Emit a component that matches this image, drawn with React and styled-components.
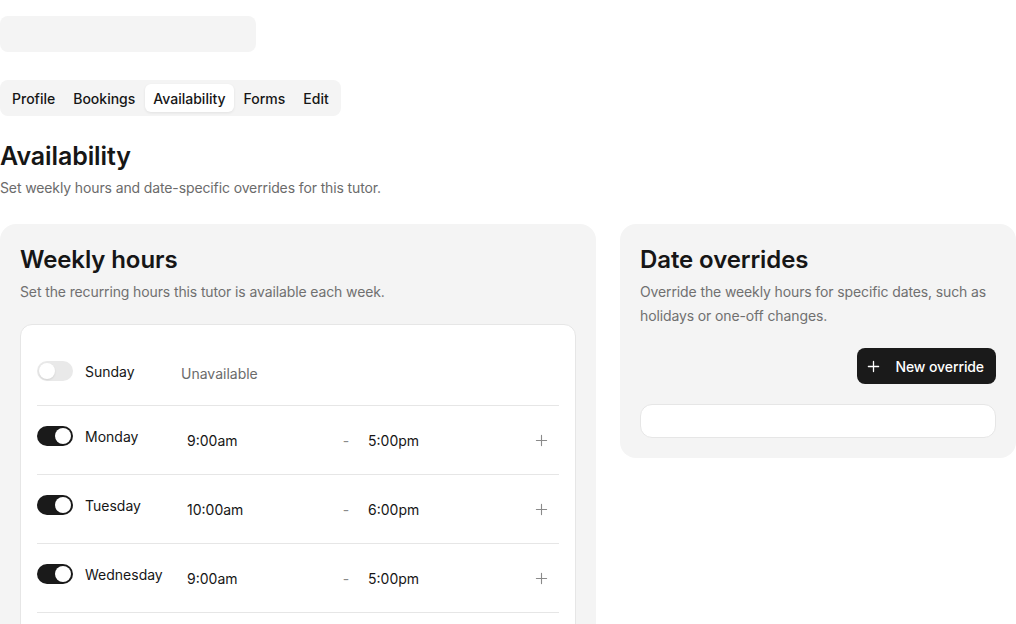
import React from "react";
import styled, { createGlobalStyle } from "styled-components";

const Global = createGlobalStyle`
  html, body { margin: 0; padding: 0; overflow: hidden; background: #fff; }
  body { font-family: Inter, "Noto Sans", sans-serif; color: #161616; -webkit-font-smoothing: antialiased; }
  * { box-sizing: border-box; }
`;

const Page = styled.div`
  width: 1016px;
  padding-top: 16px;
  display: flex;
  flex-direction: column;
`;

const Skeleton = styled.div`
  width: 256px;
  height: 36px;
  border-radius: 8px;
  background: #f4f4f4;
`;

const Tabs = styled.nav`
  margin-top: 28px;
  align-self: flex-start;
  display: flex;
  gap: 2px;
  padding: 4px;
  height: 36px;
  border-radius: 8px;
  background: #f4f4f4;
`;

const Tab = styled.button`
  border: 0;
  font: inherit;
  font-size: 14px;
  font-weight: 500;
  color: #161616;
  padding: 0 8px;
  height: 28px;
  border-radius: 6px;
  background: ${(p) => (p.$active ? "#fff" : "transparent")};
  box-shadow: ${(p) => (p.$active ? "0 1px 3px rgba(0,0,0,0.08)" : "none")};
`;

const Header = styled.header`
  margin-top: 24px;
`;

const H1 = styled.h1`
  margin: 0;
  font-size: 25px;
  line-height: 32px;
  font-weight: 600;
  letter-spacing: -0.1px;
`;

const Lead = styled.p`
  margin: 4px 0 0;
  font-size: 14px;
  line-height: 24px;
  letter-spacing: -0.12px;
  color: #6b6b6b;
`;

const Columns = styled.div`
  margin-top: 24px;
  display: grid;
  grid-template-columns: 596px 1fr;
  gap: 24px;
  align-items: start;
`;

const Card = styled.section`
  background: #f4f4f4;
  border-radius: 16px;
  padding: 20px;
  display: flex;
  flex-direction: column;
`;

const CardTitle = styled.h2`
  margin: 0;
  font-size: 24px;
  line-height: 32px;
  font-weight: 600;
  letter-spacing: -0.1px;
`;

const CardText = styled.p`
  margin: 4px 0 0;
  font-size: 14px;
  line-height: 24px;
  letter-spacing: -0.12px;
  color: #707070;
`;

const WhiteBox = styled.div`
  margin-top: 20px;
  background: #fff;
  border: 1px solid #e6e6e6;
  border-radius: 12px;
  padding: ${(p) => (p.$empty ? "0" : "16px")};
  height: ${(p) => (p.$empty ? "34px" : "auto")};
`;

const Row = styled.div`
  display: grid;
  grid-template-columns: 36px 84px 1fr 8px 1fr 36px;
  column-gap: 12px;
  align-items: start;
  padding: 16px 0;
  border-bottom: 1px solid #e6e6e6;
`;

const ToggleWrap = styled.div`
  height: 28px;
  display: flex;
  align-items: center;
`;

const Toggle = styled.span`
  position: relative;
  width: 36px;
  height: 20px;
  border-radius: 10px;
  background: ${(p) => (p.$on ? "#1a1a1a" : "#e9e9e9")};
  &::after {
    content: "";
    position: absolute;
    top: 2px;
    left: ${(p) => (p.$on ? "18px" : "2px")};
    width: 16px;
    height: 16px;
    border-radius: 50%;
    background: #fff;
    box-shadow: 0 1px 2px rgba(0,0,0,0.1);
  }
`;

const DayLabel = styled.span`
  height: 28px;
  display: flex;
  align-items: center;
  font-size: 14px;
  color: #161616;
`;

const Unavailable = styled.span`
  grid-column: 3 / span 3;
  height: 32px;
  display: flex;
  align-items: center;
  font-size: 14px;
  color: #6b6b6b;
`;

const Time = styled.span`
  height: 36px;
  display: flex;
  align-items: center;
  padding: 1px 0 0 6px;
  font-size: 14px;
  color: #161616;
`;

const Dash = styled.span`
  height: 36px;
  display: flex;
  align-items: center;
  justify-content: center;
  font-size: 14px;
  color: #8a8a8a;
`;

const IconBtn = styled.button`
  border: 0;
  background: transparent;
  height: 36px;
  width: 36px;
  padding: 0;
  display: flex;
  align-items: center;
  justify-content: center;
  color: #8a8a8a;
`;

const Actions = styled.div`
  margin-top: 20px;
  display: flex;
  justify-content: flex-end;
`;

const PrimaryBtn = styled.button`
  border: 0;
  font: inherit;
  font-size: 14px;
  font-weight: 500;
  letter-spacing: -0.1px;
  height: 36px;
  padding: 0 12px 0 10px;
  border-radius: 8px;
  background: #1a1a1a;
  color: #fff;
  display: flex;
  align-items: center;
  gap: 15px;
`;

const Plus = ({ size = 14, w = 1.3 }) => (
  <svg width={size} height={size} viewBox="0 0 14 14" fill="none" stroke="currentColor" strokeWidth={w} strokeLinecap="round">
    <path d="M7 1.5v11M1.5 7h11" />
  </svg>
);

const days = [
  { d: "Sunday", on: false },
  { d: "Monday", on: true, s: "9:00am", e: "5:00pm" },
  { d: "Tuesday", on: true, s: "10:00am", e: "6:00pm" },
  { d: "Wednesday", on: true, s: "9:00am", e: "5:00pm" },
  { d: "Thursday", on: true, s: "9:00am", e: "5:00pm" },
  { d: "Friday", on: true, s: "9:00am", e: "5:00pm" },
  { d: "Saturday", on: false },
];

export default function App() {
  return (
    <>
      <Global />
      <Page>
        <Skeleton />
        <Tabs>
          <Tab>Profile</Tab>
          <Tab>Bookings</Tab>
          <Tab $active>Availability</Tab>
          <Tab>Forms</Tab>
          <Tab>Edit</Tab>
        </Tabs>
        <Header>
          <H1>Availability</H1>
          <Lead>Set weekly hours and date-specific overrides for this tutor.</Lead>
        </Header>
        <Columns>
          <Card>
            <CardTitle>Weekly hours</CardTitle>
            <CardText>Set the recurring hours this tutor is available each week.</CardText>
            <WhiteBox>
              {days.map((r) => (
                <Row key={r.d}>
                  <ToggleWrap><Toggle $on={r.on} /></ToggleWrap>
                  <DayLabel>{r.d}</DayLabel>
                  {r.on ? (
                    <>
                      <Time>{r.s}</Time>
                      <Dash>-</Dash>
                      <Time>{r.e}</Time>
                      <IconBtn aria-label="Add"><Plus size={13} w={1.2} /></IconBtn>
                    </>
                  ) : (
                    <Unavailable>Unavailable</Unavailable>
                  )}
                </Row>
              ))}
            </WhiteBox>
          </Card>
          <Card>
            <CardTitle>Date overrides</CardTitle>
            <CardText>Override the weekly hours for specific dates, such as holidays or one-off changes.</CardText>
            <Actions>
              <PrimaryBtn><Plus size={13} w={1.4} />New override</PrimaryBtn>
            </Actions>
            <WhiteBox $empty />
          </Card>
        </Columns>
      </Page>
    </>
  );
}
